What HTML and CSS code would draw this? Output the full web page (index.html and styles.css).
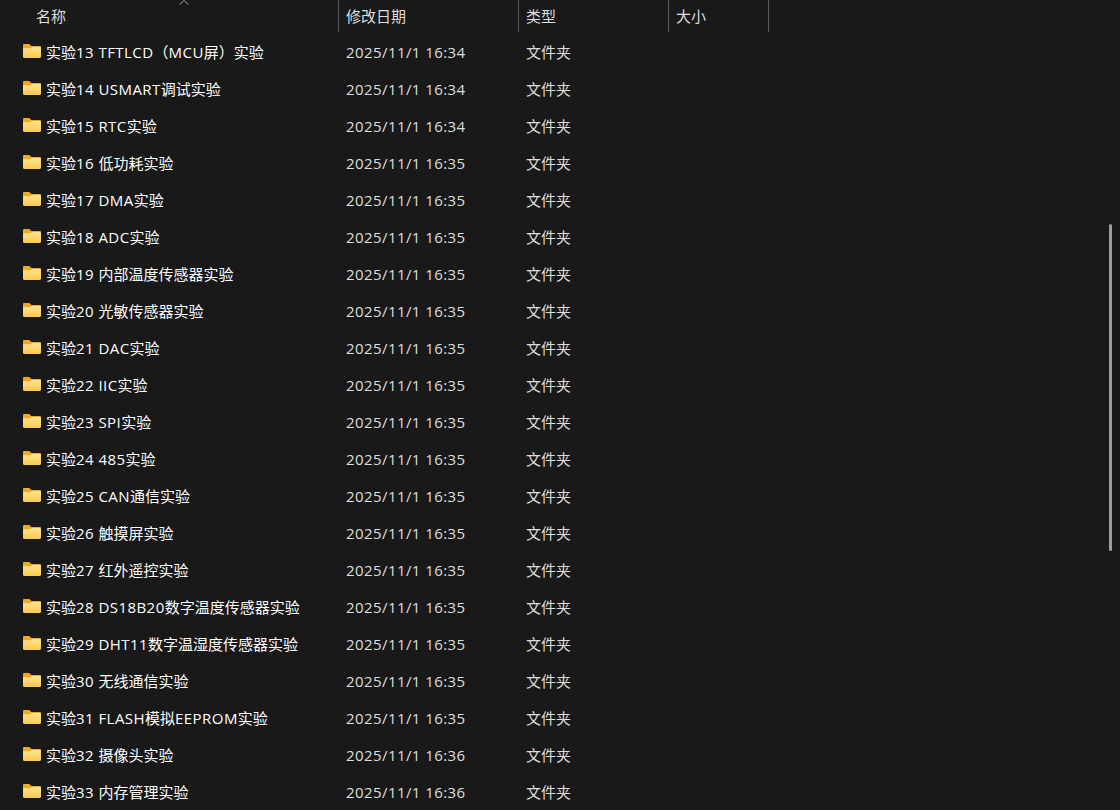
FILE: index.html
```html
<!DOCTYPE html>
<html lang="zh-CN">
<head>
<meta charset="utf-8">
<title>文件列表</title>
<link rel="stylesheet" href="styles.css">
</head>
<body>
<svg class="defs" width="0" height="0" aria-hidden="true"><defs>
<linearGradient id="fg" x1="0" y1="0" x2="0" y2="1"><stop offset="0" stop-color="#ffe38f"/><stop offset="1" stop-color="#fcc94f"/></linearGradient>
<symbol id="folder" viewBox="0 0 18 14">
<path d="M0 1.2C0 .5.5 0 1.2 0h4.6c.4 0 .7.1 1 .4L8.4 2H16.800000000000001c.7 0 1.2.5 1.2 1.2V5H0z" fill="#f2a922"/>
<path d="M0 4.2h7.2L9 3h7.8c.7 0 1.2.5 1.2 1.2v8.6c0 .7-.5 1.2-1.2 1.2H1.2C.5 14 0 13.500 0 12.800z" fill="url(#fg)"/>
</symbol></defs></svg>
<div class="list">
<header class="head">
<div class="col col-name">名称<svg class="sort" width="10" height="5" viewBox="0 0 10 5"><path d="M.5 4.500 5 .5l4.500 4" fill="none" stroke="#9a9a9a"/></svg></div>
<div class="col col-date">修改日期</div>
<div class="col col-type">类型</div>
<div class="col col-size">大小</div>
</header>
<div class="row"><div class="name"><svg class="ico"><use href="#folder"/></svg><span>实验<span class="lat">13 TFTLCD</span>（<span class="lat">MCU</span>屏）实验</span></div><div class="date">2025/11/1 16:34</div><div class="type">文件夹</div></div>
<div class="row"><div class="name"><svg class="ico"><use href="#folder"/></svg><span>实验<span class="lat">14 USMART</span>调试实验</span></div><div class="date">2025/11/1 16:34</div><div class="type">文件夹</div></div>
<div class="row"><div class="name"><svg class="ico"><use href="#folder"/></svg><span>实验<span class="lat">15 RTC</span>实验</span></div><div class="date">2025/11/1 16:34</div><div class="type">文件夹</div></div>
<div class="row"><div class="name"><svg class="ico"><use href="#folder"/></svg><span>实验<span class="lat">16 </span>低功耗实验</span></div><div class="date">2025/11/1 16:35</div><div class="type">文件夹</div></div>
<div class="row"><div class="name"><svg class="ico"><use href="#folder"/></svg><span>实验<span class="lat">17 DMA</span>实验</span></div><div class="date">2025/11/1 16:35</div><div class="type">文件夹</div></div>
<div class="row"><div class="name"><svg class="ico"><use href="#folder"/></svg><span>实验<span class="lat">18 ADC</span>实验</span></div><div class="date">2025/11/1 16:35</div><div class="type">文件夹</div></div>
<div class="row"><div class="name"><svg class="ico"><use href="#folder"/></svg><span>实验<span class="lat">19 </span>内部温度传感器实验</span></div><div class="date">2025/11/1 16:35</div><div class="type">文件夹</div></div>
<div class="row"><div class="name"><svg class="ico"><use href="#folder"/></svg><span>实验<span class="lat">20 </span>光敏传感器实验</span></div><div class="date">2025/11/1 16:35</div><div class="type">文件夹</div></div>
<div class="row"><div class="name"><svg class="ico"><use href="#folder"/></svg><span>实验<span class="lat">21 DAC</span>实验</span></div><div class="date">2025/11/1 16:35</div><div class="type">文件夹</div></div>
<div class="row"><div class="name"><svg class="ico"><use href="#folder"/></svg><span>实验<span class="lat">22 IIC</span>实验</span></div><div class="date">2025/11/1 16:35</div><div class="type">文件夹</div></div>
<div class="row"><div class="name"><svg class="ico"><use href="#folder"/></svg><span>实验<span class="lat">23 SPI</span>实验</span></div><div class="date">2025/11/1 16:35</div><div class="type">文件夹</div></div>
<div class="row"><div class="name"><svg class="ico"><use href="#folder"/></svg><span>实验<span class="lat">24 485</span>实验</span></div><div class="date">2025/11/1 16:35</div><div class="type">文件夹</div></div>
<div class="row"><div class="name"><svg class="ico"><use href="#folder"/></svg><span>实验<span class="lat">25 CAN</span>通信实验</span></div><div class="date">2025/11/1 16:35</div><div class="type">文件夹</div></div>
<div class="row"><div class="name"><svg class="ico"><use href="#folder"/></svg><span>实验<span class="lat">26 </span>触摸屏实验</span></div><div class="date">2025/11/1 16:35</div><div class="type">文件夹</div></div>
<div class="row"><div class="name"><svg class="ico"><use href="#folder"/></svg><span>实验<span class="lat">27 </span>红外遥控实验</span></div><div class="date">2025/11/1 16:35</div><div class="type">文件夹</div></div>
<div class="row"><div class="name"><svg class="ico"><use href="#folder"/></svg><span>实验<span class="lat">28 DS18B20</span>数字温度传感器实验</span></div><div class="date">2025/11/1 16:35</div><div class="type">文件夹</div></div>
<div class="row"><div class="name"><svg class="ico"><use href="#folder"/></svg><span>实验<span class="lat">29 DHT11</span>数字温湿度传感器实验</span></div><div class="date">2025/11/1 16:35</div><div class="type">文件夹</div></div>
<div class="row"><div class="name"><svg class="ico"><use href="#folder"/></svg><span>实验<span class="lat">30 </span>无线通信实验</span></div><div class="date">2025/11/1 16:35</div><div class="type">文件夹</div></div>
<div class="row"><div class="name"><svg class="ico"><use href="#folder"/></svg><span>实验<span class="lat">31 FLASH</span>模拟<span class="lat">EEPROM</span>实验</span></div><div class="date">2025/11/1 16:35</div><div class="type">文件夹</div></div>
<div class="row"><div class="name"><svg class="ico"><use href="#folder"/></svg><span>实验<span class="lat">32 </span>摄像头实验</span></div><div class="date">2025/11/1 16:36</div><div class="type">文件夹</div></div>
<div class="row"><div class="name"><svg class="ico"><use href="#folder"/></svg><span>实验<span class="lat">33 </span>内存管理实验</span></div><div class="date">2025/11/1 16:36</div><div class="type">文件夹</div></div>
</div>
<div class="thumb"></div>
</body>
</html>
```

FILE: styles.css
```css
html, body {
  margin: 0;
  height: 100%;
  overflow: hidden;
  background: #191919;
}
body {
  font-family: "Open Sans", "Noto Sans CJK SC", sans-serif;
  font-size: 15px;
  color: #fff;
}
.defs { position: absolute; }
.head {
  display: flex;
  height: 32px;
  margin-bottom: 2px;
  color: #dedede;
}
.col {
  box-sizing: border-box;
  border-right: 1px solid #5a5a5a;
  padding-left: 7px;
  line-height: 33px;
  position: relative;
}
.col-name { width: 339px; padding-left: 36px; }
.col-date { width: 180px; }
.col-type { width: 150px; }
.col-size { width: 100px; }
.sort { position: absolute; left: 179px; top: 0; }
.row {
  display: flex;
  height: 37px;
  line-height: 37px;
}
.name {
  width: 339px;
  padding-left: 23px;
  box-sizing: border-box;
  display: flex;
  align-items: center;
  white-space: pre;
}
.lat { letter-spacing: 0.45px; }
.ico { width: 18px; height: 14px; margin: -3px 5px 0 0; flex: none; }
.date { width: 180px; padding-left: 7px; box-sizing: border-box; color: #dedede; letter-spacing: 0.42px; }
.type { width: 150px; padding-left: 7px; box-sizing: border-box; color: #dedede; }
.thumb {
  position: absolute;
  left: 1109px;
  top: 224px;
  width: 3px;
  height: 327px;
  background: #9e9e9e;
  border-radius: 1.5px;
}
```
